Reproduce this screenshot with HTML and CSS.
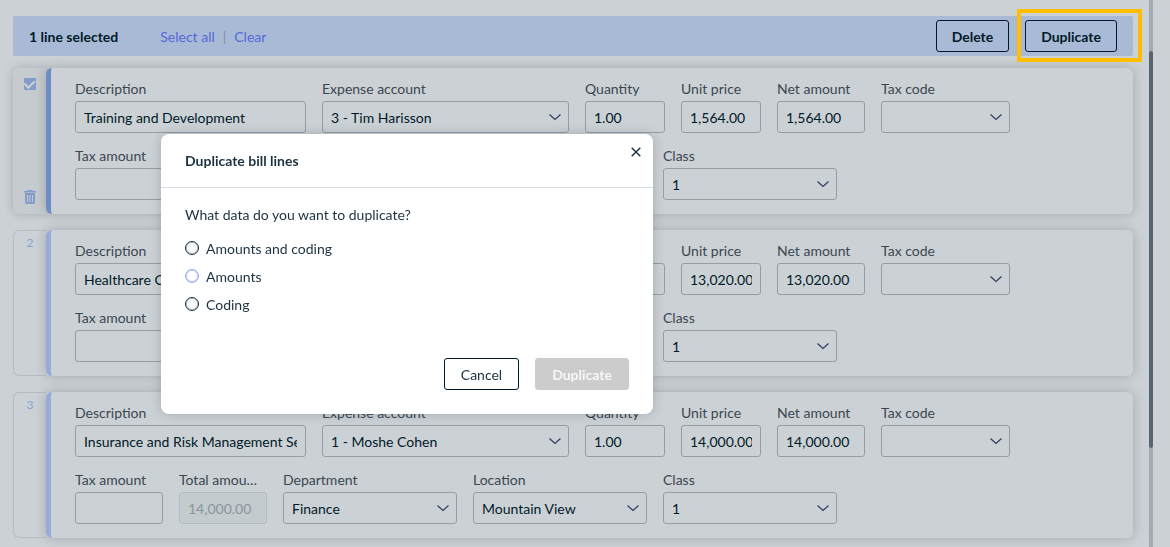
FILE: index.html
```html
<!DOCTYPE html>
<html lang="en">

<head>
    <meta charset="UTF-8">
    <title>Bill lines</title>
    <link rel="stylesheet" href="styles.css">
</head>

<body>

    <svg class="sprite" aria-hidden="true">
        <symbol id="chevron" viewBox="0 0 12 8">
            <path d="M0.500 1.500 L6 6.500 L11.500 1.500" fill="none" stroke="currentColor" stroke-width="1.200" />
        </symbol>
    </svg>

    <div class="page">
        <main class="content">
            <div class="selection-bar">
                <strong>1 line selected</strong>
                <div class="links">
                    <a href="#">Select all</a>
                    <span class="divider">|</span>
                    <a href="#">Clear</a>
                </div>
                <div class="bar-actions">
                    <button class="btn bold">Delete</button>
                    <div class="highlight">
                        <button class="btn bold">Duplicate</button>
                    </div>
                </div>
            </div>

            <!-- Line 1 -->
            <section class="line selected">
                <div class="rail">
                    <input type="checkbox" class="check" aria-label="Select line 1" checked>
                    <button class="trash" aria-label="Delete line 1">
                        <svg width="12" height="14" viewBox="0 0 12 14" fill="currentColor">
                            <path d="M3.500 0 H8.500 V1 H12 V2.500 H0 V1 H3.500 Z" />
                            <path fill-rule="evenodd" d="M1 3 H11 V12.500 Q11 14 9.500 14 H2.500 Q1 14 1 12.500 Z M3 5 V12 H4 V5 Z M5.500 5 V12 H6.500 V5 Z M8 5 V12 H9 V5 Z" />
                        </svg>
                    </button>
                </div>
                <div class="card">
                    <div class="row row-main">
                        <div class="field"><label for="desc1">Description</label><input id="desc1" value="Training and Development"></div>
                        <div class="field"><label for="acc1">Expense account</label>
                            <div class="select"><select id="acc1"><option>3 - Tim Harisson</option></select><svg><use href="#chevron" /></svg></div>
                        </div>
                        <div class="field"><label for="qty1">Quantity</label><input id="qty1" value="1.00"></div>
                        <div class="field"><label for="price1">Unit price</label><input id="price1" value="1,564.00"></div>
                        <div class="field"><label for="net1">Net amount</label><input id="net1" value="1,564.00"></div>
                        <div class="field"><label for="code1">Tax code</label>
                            <div class="select"><select id="code1"><option></option></select><svg><use href="#chevron" /></svg></div>
                        </div>
                    </div>
                    <div class="row row-extra">
                        <div class="field"><label for="tax1">Tax amount</label><input id="tax1"></div>
                        <div class="field"><label for="total1">Total amount</label><input id="total1" disabled></div>
                        <div class="field"><label for="dep1">Department</label>
                            <div class="select"><select id="dep1"><option></option></select><svg><use href="#chevron" /></svg></div>
                        </div>
                        <div class="field"><label for="loc1">Location</label>
                            <div class="select"><select id="loc1"><option></option></select><svg><use href="#chevron" /></svg></div>
                        </div>
                        <div class="field"><label for="class1">Class</label>
                            <div class="select"><select id="class1"><option>1</option></select><svg><use href="#chevron" /></svg></div>
                        </div>
                    </div>
                </div>
            </section>

            <!-- Line 2 -->
            <section class="line">
                <div class="rail">2</div>
                <div class="card">
                    <div class="row row-main">
                        <div class="field"><label for="desc2">Description</label><input id="desc2" value="Healthcare C"></div>
                        <div class="field"><label for="acc2">Expense account</label>
                            <div class="select"><select id="acc2"><option></option></select><svg><use href="#chevron" /></svg></div>
                        </div>
                        <div class="field"><label for="qty2">Quantity</label><input id="qty2"></div>
                        <div class="field"><label for="price2">Unit price</label><input id="price2" value="13,020.00"></div>
                        <div class="field"><label for="net2">Net amount</label><input id="net2" value="13,020.00"></div>
                        <div class="field"><label for="code2">Tax code</label>
                            <div class="select"><select id="code2"><option></option></select><svg><use href="#chevron" /></svg></div>
                        </div>
                    </div>
                    <div class="row row-extra">
                        <div class="field"><label for="tax2">Tax amount</label><input id="tax2"></div>
                        <div class="field"><label for="total2">Total amount</label><input id="total2" disabled></div>
                        <div class="field"><label for="dep2">Department</label>
                            <div class="select"><select id="dep2"><option></option></select><svg><use href="#chevron" /></svg></div>
                        </div>
                        <div class="field"><label for="loc2">Location</label>
                            <div class="select"><select id="loc2"><option></option></select><svg><use href="#chevron" /></svg></div>
                        </div>
                        <div class="field"><label for="class2">Class</label>
                            <div class="select"><select id="class2"><option>1</option></select><svg><use href="#chevron" /></svg></div>
                        </div>
                    </div>
                </div>
            </section>

            <!-- Line 3 -->
            <section class="line">
                <div class="rail">3</div>
                <div class="card">
                    <div class="row row-main">
                        <div class="field"><label for="desc3">Description</label><input id="desc3" value="Insurance and Risk Management Services"></div>
                        <div class="field"><label for="acc3">Expense account</label>
                            <div class="select"><select id="acc3"><option>1 - Moshe Cohen</option></select><svg><use href="#chevron" /></svg></div>
                        </div>
                        <div class="field"><label for="qty3">Quantity</label><input id="qty3" value="1.00"></div>
                        <div class="field"><label for="price3">Unit price</label><input id="price3" value="14,000.00"></div>
                        <div class="field"><label for="net3">Net amount</label><input id="net3" value="14,000.00"></div>
                        <div class="field"><label for="code3">Tax code</label>
                            <div class="select"><select id="code3"><option></option></select><svg><use href="#chevron" /></svg></div>
                        </div>
                    </div>
                    <div class="row row-extra">
                        <div class="field"><label for="tax3">Tax amount</label><input id="tax3"></div>
                        <div class="field"><label for="total3">Total amount</label><input id="total3" value="14,000.00" disabled></div>
                        <div class="field"><label for="dep3">Department</label>
                            <div class="select"><select id="dep3"><option>Finance</option></select><svg><use href="#chevron" /></svg></div>
                        </div>
                        <div class="field"><label for="loc3">Location</label>
                            <div class="select"><select id="loc3"><option>Mountain View</option></select><svg><use href="#chevron" /></svg></div>
                        </div>
                        <div class="field"><label for="class3">Class</label>
                            <div class="select"><select id="class3"><option>1</option></select><svg><use href="#chevron" /></svg></div>
                        </div>
                    </div>
                </div>
            </section>
        </main>
        <div class="scroll-track">
            <div class="scroll-thumb"></div>
        </div>
    </div>

    <div class="overlay">
        <div class="modal" role="dialog" aria-labelledby="modal-title">
            <header class="modal-header">
                <h2 id="modal-title">Duplicate bill lines</h2>
                <button class="close" aria-label="Close">
                    <svg width="10" height="10" viewBox="0 0 10 10">
                        <path d="M0.700 0.700 L9.300 9.300 M9.300 0.700 L0.700 9.300" stroke="currentColor" stroke-width="1.400" />
                    </svg>
                </button>
            </header>
            <div class="modal-body">
                <p>What data do you want to duplicate?</p>
                <label class="option"><input type="radio" name="data">Amounts and coding</label>
                <label class="option hovered"><input type="radio" name="data">Amounts</label>
                <label class="option"><input type="radio" name="data">Coding</label>
            </div>
            <footer class="modal-footer">
                <button class="btn">Cancel</button>
                <button class="btn bold" disabled>Duplicate</button>
            </footer>
        </div>
    </div>

</body>

</html>
```
FILE: styles.css
```css
* {
    box-sizing: border-box;
}

body {
    margin: 0;
    height: 100vh;
    overflow: hidden;
    background: #ccd1d5;
    color: #001a29;
    font-family: Lato, "Liberation Sans", sans-serif;
    font-size: 14px;
    line-height: 20px;
}

input,
select,
button {
    font: inherit;
    color: inherit;
}

.sprite {
    display: none;
}

.page {
    display: flex;
    gap: 16px;
    height: 100vh;
    padding: 0 17px 0 13px;
}

.content {
    flex: 1;
    min-width: 0;
    padding-top: 16px;
}

/* bar above the lines */
.selection-bar {
    display: flex;
    align-items: center;
    height: 40px;
    margin-bottom: 12px;
    padding: 0 16px;
    background: #a9bad6;
    border-radius: 2px;
}

.selection-bar strong,
.links {
    padding-top: 2px;
}

.links {
    display: flex;
    gap: 8px;
    margin-left: 42px;
}

.links a {
    color: #5468d8;
    text-decoration: none;
}

.divider {
    color: #848f99;
}

.bar-actions {
    display: flex;
    gap: 16px;
    margin-left: auto;
}

.btn {
    height: 32px;
    padding: 2px 15px 0;
    background: transparent;
    border: 1px solid #001a29;
    border-radius: 3px;
    cursor: pointer;
}

.bold {
    font-weight: bold;
}

.highlight {
    position: relative;
}

.highlight::after {
    content: "";
    position: absolute;
    inset: -11px -25px -10px -8px;
    border: 4px solid #ffbf00;
    pointer-events: none;
}

/* bill lines */
.line {
    display: flex;
    margin-bottom: 16px;
}

.rail {
    width: 33px;
    padding-top: 2px;
    border: 1px solid #b6bdc1;
    border-right: none;
    border-radius: 6px 0 0 6px;
    color: #8aa3cc;
    font-size: 12px;
    text-align: center;
}

.selected .rail {
    display: flex;
    flex-direction: column;
    justify-content: space-between;
    align-items: center;
    padding: 10px 0;
    background: #c6cbcf;
    border: none;
    box-shadow: 0 0 10px rgba(0, 20, 30, 0.2);
}

.card {
    flex: 1;
    min-width: 0;
    display: flex;
    flex-direction: column;
    gap: 13px;
    padding: 11px 0 14px 24px;
    background: #ccd1d5;
    border-left: 5px solid #96abd9;
    border-radius: 6px;
    box-shadow: 0 0 12px rgba(0, 20, 30, 0.22);
}

.selected .card {
    border-left-color: #6f8cc8;
}

.check {
    appearance: none;
    display: grid;
    place-items: center;
    width: 12px;
    height: 12px;
    margin: 0;
    background: #839cca;
    border-radius: 1px;
}

.check::after {
    content: "";
    width: 5px;
    height: 8px;
    margin-bottom: 3px;
    border: solid #ccd1d5;
    border-width: 0 2px 2px 0;
    rotate: 45deg;
}

.trash {
    display: flex;
    padding: 0;
    background: none;
    border: none;
    color: #839cca;
}

.row {
    display: grid;
    gap: 16px;
}

/* the last column of each row stays empty */
.row-main {
    grid-template-columns:
        minmax(0, 231fr) minmax(0, 247fr) minmax(0, 80fr) minmax(0, 80fr) minmax(0, 88fr) minmax(0, 129fr) minmax(0, 107fr);
}

.row-extra {
    grid-template-columns:
        minmax(0, 88fr) minmax(0, 88fr) minmax(0, 174fr) minmax(0, 174fr) minmax(0, 174fr) minmax(0, 280fr);
}

.field {
    display: flex;
    flex-direction: column;
    gap: 2px;
}

.field label {
    padding-right: 8px;
    overflow: hidden;
    color: #3b4750;
    white-space: nowrap;
    text-overflow: ellipsis;
}

.field input,
.field select {
    width: 100%;
    height: 32px;
    padding: 0 8px;
    background: transparent;
    border: 1px solid #949ea4;
    border-radius: 3px;
    outline: none;
}

.field select {
    appearance: none;
    padding-top: 2px;
}

.field input:disabled {
    background: #c4cbce;
    border-color: #b3bcc0;
    color: #8a959d;
}

.select {
    position: relative;
}

.select svg {
    position: absolute;
    top: 12px;
    right: 8px;
    width: 12px;
    height: 8px;
    color: #2f3c5c;
    pointer-events: none;
}

.scroll-track {
    width: 4px;
    padding-top: 51px;
    background: #a2abb3;
}

.scroll-thumb {
    height: 397px;
    background: #56656f;
    border-radius: 2px;
}

/* dialog */
.overlay {
    position: fixed;
    inset: 0;
    padding: 134px 161px;
}

.modal {
    max-width: 492px;
    background: #fff;
    border-radius: 8px;
    box-shadow: 0 0 12px rgba(0, 20, 30, 0.2);
    color: #1b3241;
}

.modal-header {
    display: flex;
    justify-content: space-between;
    align-items: flex-start;
    padding: 13px 12px 16px 24px;
    border-bottom: 1px solid #d9dbe6;
}

.modal-header h2 {
    margin: 6px 0 2px;
    font-size: 14px;
    line-height: 16px;
}

.close {
    display: flex;
    padding: 0;
    background: none;
    border: none;
}

.modal-body {
    padding: 17px 24px 0;
}

.modal-body p {
    margin: 0 0 10px;
}

.option {
    display: flex;
    align-items: center;
    gap: 7px;
    height: 28px;
}

.option input {
    appearance: none;
    width: 14px;
    height: 14px;
    margin: 0 0 2px;
    border: 1px solid #1b3241;
    border-radius: 50%;
    box-shadow: inset 0 0 0 1px rgba(27, 50, 65, 0.3);
}

.hovered input {
    border-color: #91a7ee;
    box-shadow: inset 0 0 0 1px rgba(145, 167, 238, 0.5);
}

.modal-footer {
    display: flex;
    justify-content: flex-end;
    gap: 16px;
    padding: 39px 24px 24px;
}

.modal-footer .btn {
    padding: 2px 16px 0;
}

.modal-footer .btn:disabled {
    background: #ccc;
    border-color: #ccc;
    color: #f7f7f7;
}
```
